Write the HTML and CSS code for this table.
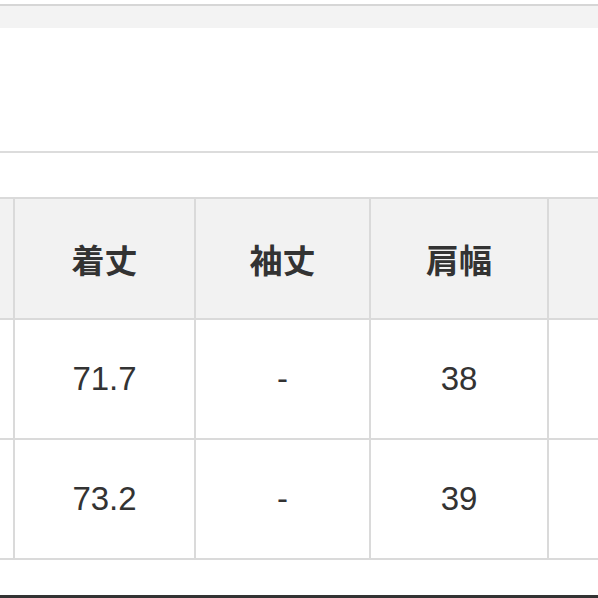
FILE: index.html
```html
<!DOCTYPE html>
<html lang="ja">
<head>
<meta charset="utf-8">
<title>サイズ表</title>
<link rel="stylesheet" href="styles.css">
</head>
<body>
<div class="page">
  <div class="topbar"></div>
  <div class="blank"></div>
  <table class="size">
    <colgroup>
      <col class="c0"><col class="c1"><col class="c2"><col class="c3"><col class="c4">
    </colgroup>
    <thead>
      <tr><th class="edge"></th><th>着丈</th><th>袖丈</th><th>肩幅</th><th></th></tr>
    </thead>
    <tbody>
      <tr><td class="edge"></td><td>71.7</td><td>-</td><td>38</td><td></td></tr>
      <tr><td class="edge"></td><td>73.2</td><td>-</td><td>39</td><td></td></tr>
    </tbody>
  </table>
  <div class="after"></div>
</div>
</body>
</html>
```
FILE: styles.css
```css
html, body {
  margin: 0;
  padding: 0;
  background: #ffffff;
}
.page {
  width: 598px;
  height: 598px;
  overflow: hidden;
  display: flex;
  flex-direction: column;
  background: #ffffff;
}
.topbar {
  margin-top: 4px;
  height: 22px;
  border-top: 2px solid #d6d6d6;
  background: #f3f3f3;
  flex: none;
}
.blank {
  height: 123px;
  border-bottom: 2px solid #dcdcdc;
  margin-bottom: 44px;
  flex: none;
}
.size {
  border-collapse: collapse;
  table-layout: fixed;
  width: 800px;
  flex: none;
  color: #333333;
}
.c0 { width: 14px; }
.c1 { width: 181px; }
.c2 { width: 175px; }
.c3 { width: 178px; }
.c4 { width: 252px; }
.size th,
.size td {
  border: 2px solid #dadada;
  text-align: center;
  vertical-align: middle;
  padding: 0;
}
.size .edge {
  border-left: none;
}
.size th {
  height: 119px;
  background: #f2f2f2;
  font-family: "Noto Sans CJK JP", sans-serif;
  font-weight: 700;
  font-size: 33px;
}
.size td {
  height: 118px;
  font-family: "Liberation Sans", Arial, sans-serif;
  font-size: 33px;
}
.after {
  flex: 1;
  border-bottom: 3px solid #333333;
}
```
